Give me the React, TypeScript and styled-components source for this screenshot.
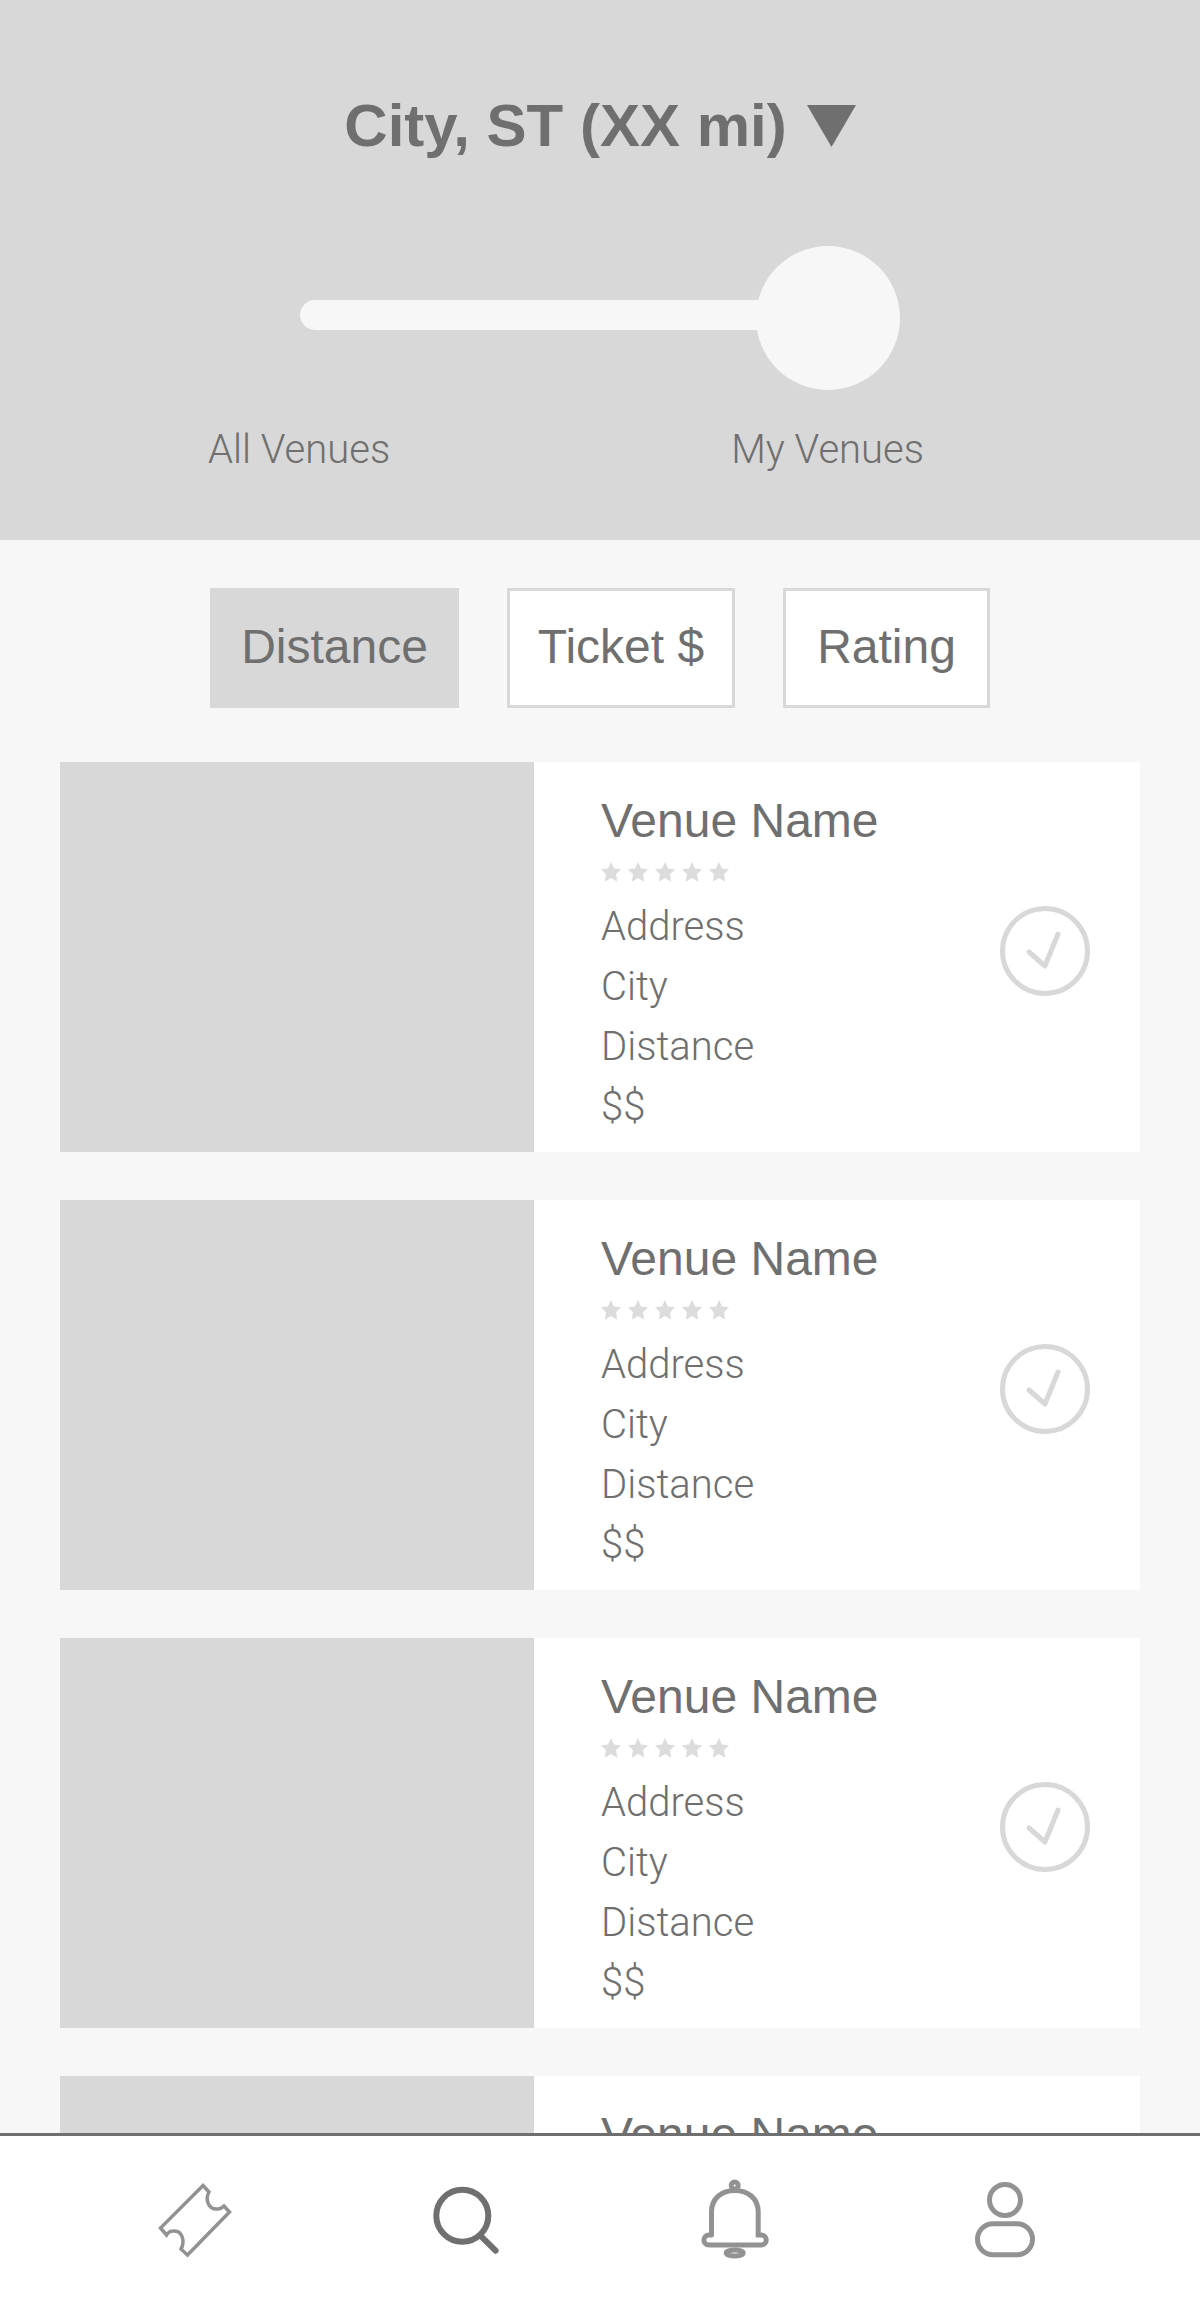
import React from 'react'
import styled, { createGlobalStyle } from 'styled-components'

const GlobalStyle = createGlobalStyle`
  html, body {
    margin: 0;
    padding: 0;
    height: 100%;
  }
  #root {
    height: 100%;
  }
  body {
    font-family: 'Liberation Sans', Arial, sans-serif;
    color: #6f6f6f;
    background: #f7f7f7;
  }
`

const Screen = styled.div`
  height: 100vh;
  display: flex;
  flex-direction: column;
  overflow: hidden;
`

const Header = styled.header`
  flex: none;
  height: 446px;
  padding-top: 94px;
  background: #d8d8d8;
`

const TitleRow = styled.div`
  display: flex;
  justify-content: center;
  gap: 20px;
`

const Title = styled.h1`
  margin: 0;
  font-size: 60px;
  line-height: 64px;
  font-weight: 700;
`

const Caret = styled.svg`
  width: 49px;
  height: 42px;
  margin-top: 11px;
  fill: #6f6f6f;
`

const Slider = styled.div`
  width: 600px;
  margin: 88px auto 0;
  display: flex;
  align-items: center;
`

const Track = styled.div`
  flex: 1;
  height: 30px;
  margin-bottom: 6px;
  border-radius: 15px 0 0 15px;
  background: #f7f7f7;
`

const Thumb = styled.div`
  flex: none;
  width: 144px;
  height: 144px;
  margin-left: -2px;
  border-radius: 50%;
  background: #f7f7f7;
`

const SliderLabels = styled.div`
  width: 716px;
  margin: 37px 0 0 208px;
  display: flex;
  justify-content: space-between;
`

const LightText = styled.span`
  font-family: Roboto, 'Liberation Sans', sans-serif;
  font-weight: 300;
  font-size: 40px;
  line-height: 46px;
`

const Filters = styled.div`
  flex: none;
  margin-top: 48px;
  display: flex;
  justify-content: center;
  gap: 48px;
`

const FilterButton = styled.button<{ $active?: boolean; $width: number }>`
  width: ${(props) => props.$width}px;
  height: 120px;
  padding: 0 0 3px;
  font-family: inherit;
  font-size: 48px;
  color: #6f6f6f;
  border: 3px solid #d8d8d8;
  background: ${(props) => (props.$active ? '#d8d8d8' : '#ffffff')};
`

const List = styled.main`
  flex: 1;
  min-height: 0;
  margin-top: 54px;
  padding: 0 60px;
  display: flex;
  flex-direction: column;
  gap: 48px;
  overflow: hidden;
`

const Card = styled.article`
  flex: none;
  height: 390px;
  display: flex;
  background: #ffffff;
`

const Photo = styled.div`
  flex: none;
  width: 474px;
  background: #d8d8d8;
`

const Details = styled.div`
  flex: 1;
  padding: 31px 50px 0 67px;
  display: flex;
  justify-content: space-between;
`

const VenueName = styled.h2`
  margin: 0;
  font-size: 48px;
  line-height: 56px;
  font-weight: 400;
`

const Stars = styled.div`
  margin: 13px 0 15px;
  display: flex;
  gap: 7px;
`

const Star = styled.svg`
  width: 20px;
  height: 20px;
  fill: #dcdcdc;
`

const InfoLine = styled.div`
  height: 60px;
  display: flex;
  align-items: center;
`

const CheckIcon = styled.svg`
  flex: none;
  align-self: center;
  width: 90px;
  height: 90px;
  margin-bottom: 44px;
  fill: none;
  stroke: #d8d8d8;
  stroke-width: 5;
  stroke-linecap: round;
  stroke-linejoin: round;
`

const Nav = styled.nav`
  flex: none;
  height: 168px;
  padding: 0 60px;
  display: grid;
  grid-template-columns: repeat(4, 1fr);
  justify-items: center;
  align-items: center;
  border-top: 3px solid #6f6f6f;
  background: #ffffff;
`

const NavIcon = styled.svg<{ $weight: number; $color: string }>`
  width: 80px;
  height: 80px;
  overflow: visible;
  fill: none;
  stroke: ${(props) => props.$color};
  stroke-width: ${(props) => props.$weight};
  stroke-linecap: round;
`

const StarShape = () => (
  <Star viewBox="0 0 20 20">
    <polygon points="10,0 13,6.5 20,7.3 15,12.3 16.3,19.8 10,16 3.7,19.8 5,12.3 0,7.3 7,6.5" />
  </Star>
)

const App = () => {
  return (
    <Screen>
      <GlobalStyle />
      <Header>
        <TitleRow>
          <Title>City, ST (XX mi)</Title>
          <Caret viewBox="0 0 49 42">
            <polygon points="0,0 49,0 24.5,42" />
          </Caret>
        </TitleRow>
        <Slider>
          <Track />
          <Thumb />
        </Slider>
        <SliderLabels>
          <LightText>All Venues</LightText>
          <LightText>My Venues</LightText>
        </SliderLabels>
      </Header>
      <Filters>
        {filters.map((el, i) => (
          <FilterButton key={el.label} $active={i === 0} $width={el.width}>
            {el.label}
          </FilterButton>
        ))}
      </Filters>
      <List>
        {[0, 1, 2, 3].map((card) => (
          <Card key={card}>
            <Photo />
            <Details>
              <div>
                <VenueName>Venue Name</VenueName>
                <Stars>
                  {[0, 1, 2, 3, 4].map((i) => (
                    <StarShape key={i} />
                  ))}
                </Stars>
                {infoLines.map((line) => (
                  <InfoLine key={line}>
                    <LightText>{line}</LightText>
                  </InfoLine>
                ))}
              </div>
              <CheckIcon viewBox="0 0 90 90">
                <circle cx="45" cy="45" r="42.5" />
                <path d="M29 46 L45 60 L58 28" />
              </CheckIcon>
            </Details>
          </Card>
        ))}
      </List>
      <Nav>
        <NavIcon viewBox="0 0 80 80" $weight={3.5} $color="#929292">
          <path
            strokeLinejoin="miter"
            d="M48 5.5 L54 12 C50 19 53 30 63 29 C65 29 67 28 69 26 L74.5 32 L32.5 75 L26 69 C30 62 28 50 18 51 C15.5 51 13 52.5 11.5 55 L5.5 48 Z"
          />
        </NavIcon>
        <NavIcon viewBox="0 0 80 80" $weight={6} $color="#6f6f6f">
          <circle cx="37.3" cy="35.8" r="26" />
          <path d="M56.4 56.7 L70.6 70.7" />
        </NavIcon>
        <NavIcon viewBox="0 0 80 80" $weight={5} $color="#929292">
          <circle cx="39.7" cy="5.6" r="3.5" />
          <path d="M16.5 55 V32 C16.5 18 27 10.5 39.8 10.5 C52.6 10.5 63.2 18 63.2 32 V55 H66.3 A5 5 0 0 1 66.3 65 H13.9 A5 5 0 0 1 13.9 55 H16.5" />
          <ellipse cx="39.7" cy="73" rx="8.5" ry="3" />
        </NavIcon>
        <NavIcon viewBox="0 0 80 80" $weight={5} $color="#929292">
          <ellipse cx="40" cy="20" rx="15.5" ry="15.5" />
          <rect x="12.5" y="43.8" width="55" height="31" rx="15.5" />
        </NavIcon>
      </Nav>
    </Screen>
  )
}

export default App

const filters = [
  { label: 'Distance', width: 249 },
  { label: 'Ticket $', width: 228 },
  { label: 'Rating', width: 207 },
]

const infoLines = ['Address', 'City', 'Distance', '$$']
